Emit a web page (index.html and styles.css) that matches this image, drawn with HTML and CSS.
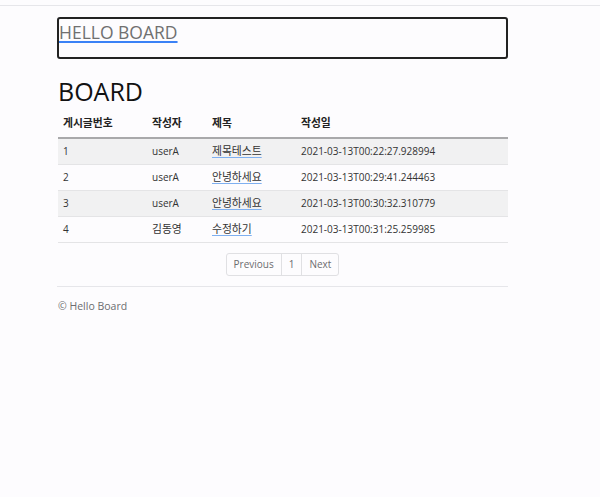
FILE: index.html
```html
<!DOCTYPE html>
<html lang="ko">
<head>
<meta charset="utf-8">
<title>Hello Board</title>
<link rel="stylesheet" href="styles.css">
</head>
<body>
<div class="topline"></div>
<div class="container">
  <header class="site-header">
    <a class="brand" href="#">HELLO BOARD</a>
  </header>
  <h1 class="title">BOARD</h1>
  <table class="board">
    <colgroup>
      <col class="c-no"><col class="c-writer"><col class="c-title"><col class="c-date">
    </colgroup>
    <thead>
      <tr class="ko"><th>게시글번호</th><th>작성자</th><th>제목</th><th>작성일</th></tr>
    </thead>
    <tbody>
      <tr class="odd"><td>1</td><td>userA</td><td class="ko"><a href="#">제목테스트</a></td><td>2021-03-13T00:22:27.928994</td></tr>
      <tr><td>2</td><td>userA</td><td class="ko"><a href="#">안녕하세요</a></td><td>2021-03-13T00:29:41.244463</td></tr>
      <tr class="odd"><td>3</td><td>userA</td><td class="ko"><a href="#">안녕하세요</a></td><td>2021-03-13T00:30:32.310779</td></tr>
      <tr><td>4</td><td class="ko">김동영</td><td class="ko"><a href="#">수정하기</a></td><td>2021-03-13T00:31:25.259985</td></tr>
    </tbody>
  </table>
  <nav class="pager">
    <ul class="pagination">
      <li><a href="#">Previous</a></li>
      <li><a href="#">1</a></li>
      <li><a href="#">Next</a></li>
    </ul>
  </nav>
  <footer class="footer">© Hello Board</footer>
</div>
</body>
</html>
```
FILE: styles.css
```css
html, body {
  margin: 0;
  padding: 0;
  background: #fdfcfe;
}
body {
  font-family: "Open Sans", "Noto Sans CJK KR", sans-serif;
  color: #333;
}
.topline {
  height: 5px;
  border-bottom: 1px solid #e6e6ea;
}
.container {
  width: 451px;
  margin-left: 57px;
}
.site-header {
  margin-top: 11px;
  height: 36px;
  border: 2px solid #222;
  border-radius: 3px;
  padding: 2px 0 0 0;
  box-sizing: content-box;
}
.brand {
  font-size: 17.5px;
  line-height: 22px;
  color: #707070;
  text-decoration: underline;
  text-decoration-color: #3b82f6;
  text-decoration-thickness: 1.5px;
  text-underline-offset: 2px;
}
.title {
  font-size: 25px;
  font-weight: 400;
  line-height: 29px;
  color: #111;
  margin: 18px 0 6px 1px;
}
.board {
  width: 450px;
  margin-left: 1px;
  border-collapse: collapse;
  font-size: 10px;
  color: #333;
}
.board .ko, .board tr.ko th {
  font-size: 10.8px;
}
.c-no { width: 89px; }
.c-writer { width: 60px; }
.c-title { width: 89px; }
.c-date { width: 212px; }
.board th {
  text-align: left;
  font-weight: 700;
  color: #222;
  padding: 4px 5px 7px;
  line-height: 14px;
  border-bottom: 2px solid #a9a9ab;
}
.board td {
  padding: 5px 5px 6px;
  line-height: 14px;
  border-top: 1px solid #e4e4e6;
}
.board tbody tr:first-child td {
  border-top: none;
}
.board tbody tr:last-child td {
  border-bottom: 1px solid #e4e4e6;
}
.board tr.odd td {
  background: #f1f1f2;
}
.board a {
  color: #333;
  text-decoration: underline;
  text-decoration-color: #7fb0f0;
  text-underline-offset: 2px;
}
.pager {
  display: flex;
  justify-content: center;
  margin-top: 10px;
  padding-bottom: 10px;
  border-bottom: 1px solid #e6e6ea;
}
.pagination {
  display: flex;
  list-style: none;
  margin: 0;
  padding: 0;
  border: 1px solid #e0e0e3;
  border-radius: 3px;
}
.pagination li + li {
  border-left: 1px solid #e0e0e3;
}
.pagination a {
  display: block;
  padding: 0 7px;
  line-height: 21px;
  font-size: 10px;
  color: #6c6c70;
  text-decoration: none;
}
.footer {
  margin-top: 12px;
  font-size: 10.5px;
  color: #6c6c70;
  margin-left: 1px;
}
```
